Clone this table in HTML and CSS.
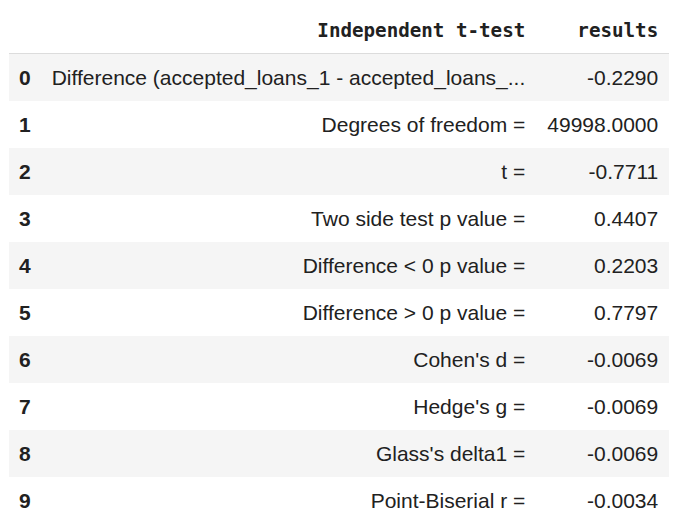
FILE: index.html
```html
<!DOCTYPE html>
<html>
<head>
<meta charset="utf-8">
<link rel="stylesheet" href="styles.css">
</head>
<body>
<table class="df">
  <thead>
    <tr>
      <th class="idx"></th>
      <th class="col">Independent t-test</th>
      <th class="col">results</th>
    </tr>
  </thead>
  <tbody>
    <tr><th class="idx">0</th><td>Difference (accepted_loans_1 - accepted_loans_...</td><td>-0.2290</td></tr>
    <tr><th class="idx">1</th><td>Degrees of freedom =</td><td>49998.0000</td></tr>
    <tr><th class="idx">2</th><td>t =</td><td>-0.7711</td></tr>
    <tr><th class="idx">3</th><td>Two side test p value =</td><td>0.4407</td></tr>
    <tr><th class="idx">4</th><td>Difference &lt; 0 p value =</td><td>0.2203</td></tr>
    <tr><th class="idx">5</th><td>Difference &gt; 0 p value =</td><td>0.7797</td></tr>
    <tr><th class="idx">6</th><td>Cohen's d =</td><td>-0.0069</td></tr>
    <tr><th class="idx">7</th><td>Hedge's g =</td><td>-0.0069</td></tr>
    <tr><th class="idx">8</th><td>Glass's delta1 =</td><td>-0.0069</td></tr>
    <tr><th class="idx">9</th><td>Point-Biserial r =</td><td>-0.0034</td></tr>
  </tbody>
</table>
</body>
</html>
```
FILE: styles.css
```css
body {
  margin: 8px 8px 8px 9px;
  background: #ffffff;
}

.df {
  border-collapse: collapse;
  font-family: "Liberation Sans", Arial, sans-serif;
  font-size: 21px;
  color: #212121;
}

.df th,
.df td {
  padding: 12px 11px;
  line-height: 23px;
  white-space: nowrap;
  text-align: right;
}

.df thead th {
  font-family: "DejaVu Sans Mono", monospace;
  font-size: 19.2px;
  font-weight: bold;
  padding-top: 11px;
  padding-bottom: 11px;
  border-bottom: 1px solid #dcdcdc;
}

.df th.idx {
  padding-left: 10px;
  padding-right: 10px;
}

.df tbody th.idx {
  font-weight: bold;
  text-align: left;
}

.df tbody tr:nth-child(odd) {
  background: #f5f5f5;
}
```
